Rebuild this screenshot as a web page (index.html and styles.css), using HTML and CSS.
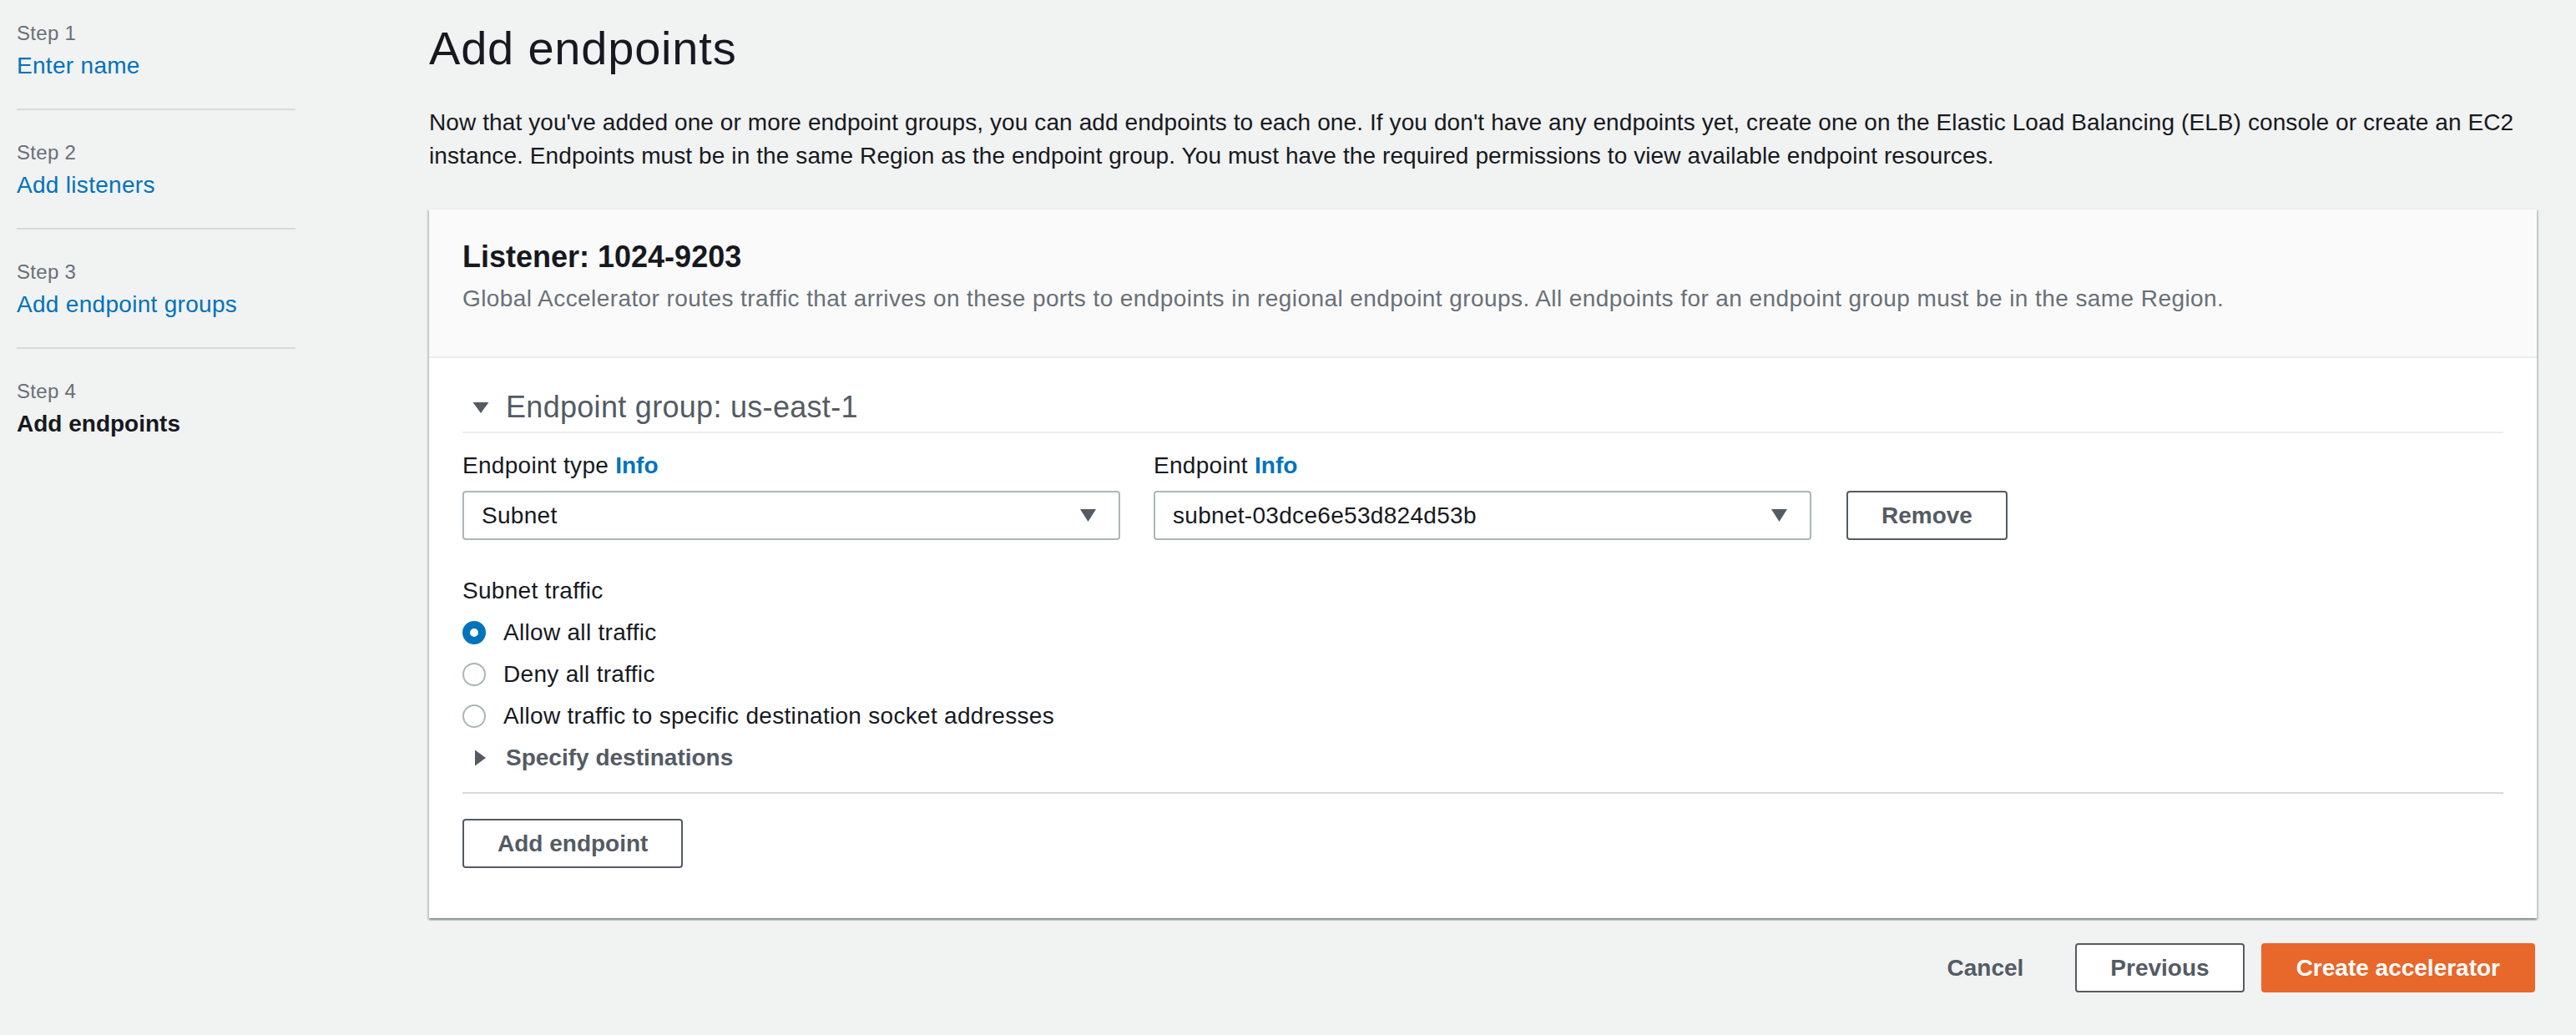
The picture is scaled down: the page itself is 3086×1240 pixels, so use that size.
FILE: index.html
```html
<!DOCTYPE html>
<html lang="en">
<head>
<meta charset="utf-8">
<title>Add endpoints</title>
<link rel="stylesheet" href="styles.css">
</head>
<body>
<div class="page">
  <nav class="sidebar">
    <ol class="steps">
      <li class="step">
        <div class="step-num">Step 1</div>
        <a class="step-link" href="#">Enter name</a>
      </li>
      <li class="step">
        <div class="step-num">Step 2</div>
        <a class="step-link" href="#">Add listeners</a>
      </li>
      <li class="step">
        <div class="step-num">Step 3</div>
        <a class="step-link" href="#">Add endpoint groups</a>
      </li>
      <li class="step step-last">
        <div class="step-num">Step 4</div>
        <span class="step-current">Add endpoints</span>
      </li>
    </ol>
  </nav>

  <main class="main">
    <h1 class="title">Add endpoints</h1>
    <p class="intro">Now that you've added one or more endpoint groups, you can add endpoints to each one. If you don't have any endpoints yet, create one on the Elastic Load Balancing (ELB) console or create an EC2 instance. Endpoints must be in the same Region as the endpoint group. You must have the required permissions to view available endpoint resources.</p>

    <section class="panel">
      <header class="panel-header">
        <h2 class="panel-title">Listener: 1024-9203</h2>
        <p class="panel-desc">Global Accelerator routes traffic that arrives on these ports to endpoints in regional endpoint groups. All endpoints for an endpoint group must be in the same Region.</p>
      </header>
      <div class="panel-body">
        <div class="group-head">
          <svg class="caret-down" width="20" height="13" viewBox="0 0 20 13"><polygon points="0.5,0 19.5,0 10,13" fill="#545b64"/></svg>
          <span class="group-title">Endpoint group: us-east-1</span>
        </div>

        <div class="fields">
          <div class="field">
            <div class="label">Endpoint type <a class="info" href="#">Info</a></div>
            <div class="select">
              <span class="select-value">Subnet</span>
              <svg class="select-arrow" width="19" height="15" viewBox="0 0 19 15"><polygon points="0,0 19,0 9.5,15" fill="#545b64"/></svg>
            </div>
          </div>
          <div class="field">
            <div class="label">Endpoint <a class="info" href="#">Info</a></div>
            <div class="select">
              <span class="select-value">subnet-03dce6e53d824d53b</span>
              <svg class="select-arrow" width="19" height="15" viewBox="0 0 19 15"><polygon points="0,0 19,0 9.5,15" fill="#545b64"/></svg>
            </div>
          </div>
          <button class="btn btn-normal btn-remove">Remove</button>
        </div>

        <div class="label traffic-label">Subnet traffic</div>
        <div class="radios">
          <label class="radio"><span class="radio-dot checked"></span><span class="radio-text">Allow all traffic</span></label>
          <label class="radio"><span class="radio-dot"></span><span class="radio-text">Deny all traffic</span></label>
          <label class="radio"><span class="radio-dot"></span><span class="radio-text">Allow traffic to specific destination socket addresses</span></label>
          <div class="expander">
            <svg class="caret-right" width="13" height="20" viewBox="0 0 13 20"><polygon points="0,0.5 13,10 0,19.5" fill="#545b64"/></svg>
            <span class="expander-text">Specify destinations</span>
          </div>
        </div>
        <div class="divider"></div>
        <button class="btn btn-normal btn-add">Add endpoint</button>
      </div>
    </section>

    <div class="footer">
      <button class="btn btn-link">Cancel</button>
      <button class="btn btn-normal">Previous</button>
      <button class="btn btn-primary">Create accelerator</button>
    </div>
  </main>
</div>
</body>
</html>
```

FILE: styles.css
```css
* { box-sizing: border-box; }

html, body {
  margin: 0;
  padding: 0;
  background: #f1f2f2;
}

body {
  font-family: "Liberation Sans", Arial, sans-serif;
  font-size: 28px;
  line-height: 40px;
  color: #16191f;
  letter-spacing: 0.3px;
}

a { text-decoration: none; }

.page {
  display: flex;
  min-height: 1240px;
  padding: 0 47px 0 20px;
}

/* Sidebar */
.sidebar {
  flex: none;
  width: 334px;
  padding-top: 24px;
}

.steps {
  list-style: none;
  margin: 0;
  padding: 0;
}

.step {
  padding-bottom: 31px;
  margin-bottom: 35px;
  border-bottom: 2px solid #d5dbdb;
}

.step-last {
  border-bottom: none;
}

.step-num {
  font-size: 24px;
  line-height: 32px;
  color: #687078;
}

.step-link {
  display: block;
  margin-top: 3px;
  color: #0073bb;
}

.step-current {
  display: block;
  margin-top: 3px;
  font-weight: bold;
  color: #16191f;
  letter-spacing: 0;
}

/* Main */
.main {
  flex: 1;
  margin-left: 160px;
  padding-top: 22px;
  min-width: 0;
}

.title {
  margin: 0;
  font-size: 56px;
  line-height: 72px;
  font-weight: normal;
  letter-spacing: 0.8px;
  color: #16191f;
}

.intro {
  margin: 33px 0 0;
  letter-spacing: 0.1px;
}

.panel {
  margin-top: 43px;
  background: #ffffff;
  box-shadow: 0 2px 2px 0 rgba(0, 28, 36, 0.3), 2px 2px 2px 0 rgba(0, 28, 36, 0.15), -2px 2px 2px 0 rgba(0, 28, 36, 0.15);
  border-top: 1px solid #eaeded;
}

.panel-header {
  background: #fafafa;
  padding: 35px 40px 49px;
  border-bottom: 2px solid #eaeded;
}

.panel-title {
  margin: 0;
  font-size: 36px;
  line-height: 44px;
  font-weight: bold;
  letter-spacing: 0;
}

.panel-desc {
  margin: 8px 0 0;
  color: #687078;
  letter-spacing: 0.42px;
}

.panel-body {
  padding: 38px 40px 60px;
}

.group-head {
  display: flex;
  align-items: center;
  height: 52px;
  padding-bottom: 8px;
  border-bottom: 2px solid #eaeded;
}

.caret-down {
  flex: none;
  margin-left: 12px;
  margin-right: 20px;
}

.group-title {
  font-size: 36px;
  line-height: 44px;
  color: #545b64;
}

.fields {
  display: grid;
  grid-template-columns: 788px 788px auto;
  column-gap: 40px;
  margin-top: 19px;
}

.field {
  display: flex;
  flex-direction: column;
}

.label {
  line-height: 40px;
  color: #16191f;
}

.info {
  color: #0073bb;
  font-weight: bold;
  letter-spacing: 0;
}

.select {
  margin-top: 10px;
  height: 59px;
  border: 2px solid #aab7b8;
  border-radius: 4px;
  background: #ffffff;
  display: flex;
  align-items: center;
  justify-content: space-between;
  padding: 0 27px 0 21px;
}

.select-value {
  color: #16191f;
}

.select-arrow {
  flex: none;
}

.btn {
  font-family: "Liberation Sans", Arial, sans-serif;
  font-size: 28px;
  font-weight: bold;
  letter-spacing: 0;
  height: 59px;
  padding: 0 40px;
  border-radius: 4px;
  border: 2px solid transparent;
  background: transparent;
  cursor: pointer;
}

.btn-normal {
  background: #ffffff;
  border-color: #545b64;
  color: #545b64;
}

.btn-remove {
  align-self: end;
  justify-self: start;
  margin-left: 2px;
}

.btn-link {
  color: #545b64;
}

.btn-primary {
  background: #e8672a;
  border-color: #e8672a;
  color: #ffffff;
}

.traffic-label {
  margin-top: 41px;
}

.radios {
  margin-top: 5px;
}

.radio {
  display: flex;
  align-items: center;
  height: 50px;
}

.radio-dot {
  flex: none;
  width: 28px;
  height: 28px;
  border-radius: 50%;
  border: 2px solid #aab7b8;
  background: #ffffff;
  margin-right: 21px;
}

.radio-dot.checked {
  border: 9px solid #0073bb;
}

.expander {
  display: flex;
  align-items: center;
  height: 50px;
}

.caret-right {
  flex: none;
  margin-left: 15px;
  margin-right: 24px;
}

.expander-text {
  font-weight: bold;
  color: #545b64;
  letter-spacing: 0;
}

.divider {
  margin-top: 16px;
  height: 2px;
  background: #d5dbdb;
}

.btn-add {
  margin-top: 30px;
}

.footer {
  display: flex;
  justify-content: flex-end;
  gap: 20px;
  margin-top: 30px;
  padding-right: 2px;
}
```
